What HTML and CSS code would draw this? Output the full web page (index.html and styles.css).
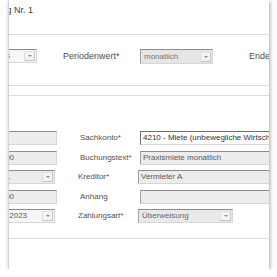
FILE: index.html
```html
<!DOCTYPE html>
<html lang="de">
<head>
  <meta charset="UTF-8" />
  <title>Wiederkehrende Buchung</title>
  <link rel="stylesheet" href="styles.css">
</head>
<body>
  <div class="dialog">
    <div class="inner">
      <div class="head">
        <div class="title"><span>Wiederkehrende Buchung Nr. 1</span></div>
      </div>

      <div class="sect-top">
        <div class="sel sel-start"><span class="val">Rhythmus</span><span class="arrow"></span></div>
        <span class="lbl lbl-period">Periodenwert*</span>
        <div class="sel sel-period"><span class="val">monatlich</span><span class="arrow"></span></div>
        <span class="lbl lbl-end">Ende <span class="warn">!</span></span>
      </div>

      <div class="spacer"></div>

      <div class="sect-main">
        <div class="row">
          <div class="inp left"></div>
          <span class="lbl">Sachkonto*</span>
          <div class="inp right edit">4210 - Miete (unbewegliche Wirtschaftsgüter)</div>
        </div>
        <div class="row">
          <div class="inp left">120.000,00</div>
          <span class="lbl">Buchungstext*</span>
          <div class="inp right">Praxismiete monatlich</div>
        </div>
        <div class="row">
          <div class="sel left-sel"><span class="val">Girokonto.</span><span class="arrow"></span></div>
          <span class="lbl">Kreditor*</span>
          <div class="inp right">Vermieter A</div>
        </div>
        <div class="row">
          <div class="inp left">120.000,00</div>
          <span class="lbl">Anhang</span>
          <div class="inp right"></div>
        </div>
        <div class="row">
          <div class="sel left-sel light"><span class="val">Februar 2023</span><span class="arrow"></span></div>
          <span class="lbl">Zahlungsart*</span>
          <div class="sel sel-pay"><span class="val">Überweisung</span><span class="arrow"></span></div>
        </div>
      </div>

      <div class="foot"></div>
    </div>
  </div>
</body>
</html>
```

FILE: styles.css
```css
body {
  margin: 0;
  background-color: #fff;
  font-family: "Liberation Sans", Arial, sans-serif;
  font-size: 9px;
  color: #555;
}
.dialog {
  margin-left: 8px;
  width: 260px;
  height: 269px;
  border-left: 1px solid #d4d4d4;
  background-color: #fff;
  box-shadow: 1px 1px 4px rgba(0,0,0,0.35);
  overflow: hidden;
}
.inner {
  margin-left: -69px;
  width: 420px;
}
.head {
  height: 34px;
  border-bottom: 1px solid #dcdcdc;
}
.title {
  width: 93px;
  height: 20px;
  display: flex;
  justify-content: flex-end;
  align-items: center;
  white-space: nowrap;
  font-size: 9px;
  color: #34404c;
}
.sect-top {
  height: 51px;
  box-sizing: border-box;
  padding-top: 14px;
  border-bottom: 1px solid #dcdcdc;
  display: flex;
  align-items: flex-start;
}
.spacer {
  height: 9px;
  border-bottom: 1px solid #dcdcdc;
}
.sect-main {
  height: 143px;
  box-sizing: border-box;
  padding-top: 35px;
  border-bottom: 1px solid #dcdcdc;
  display: flex;
  flex-direction: column;
  gap: 5.5px;
}
.foot {
  height: 40px;
}
.row {
  display: flex;
  align-items: center;
  height: 14px;
}
.lbl {
  white-space: nowrap;
  line-height: 14px;
  color: #505050;
}
.row .lbl {
  width: 60px;
  margin-left: 23px;
  font-size: 8px;
}
.lbl-period {
  width: 77px;
  margin-left: 26px;
}
.lbl-end {
  margin-left: 36px;
}
.warn {
  color: #e8a317;
  font-weight: bold;
}
.inp, .sel {
  box-sizing: border-box;
  height: 14px;
  border: 1px solid #d6d6d6;
  border-top-color: #8c8c8c;
  border-left-color: #a0a0a0;
  background-color: #ececec;
  font-size: 8px;
  line-height: 12px;
  padding-left: 3px;
  white-space: nowrap;
  overflow: hidden;
  color: #5a5a5a;
}
.inp.left {
  margin-left: 30px;
  width: 87px;
}
.inp.right {
  width: 200px;
  padding-left: 2px;
}
.inp.edit {
  background-color: #fff;
  border-top-color: #707070;
  border-left-color: #707070;
  color: #333;
}
.sel {
  display: flex;
  align-items: center;
  padding-right: 1px;
}
.sel .val {
  flex: 1;
  overflow: hidden;
}
.sel-start {
  margin-left: 30px;
  width: 67px;
  background-color: #f7f7f7;
  color: #3a6ea5;
}
.sel-period {
  width: 73px;
  height: 15px;
  background-color: #e6e6e6;
  color: #777;
}
.sel-pay {
  width: 95px;
  background-color: #e9e9e9;
  color: #666;
}
.left-sel {
  margin-left: 30px;
  width: 85px;
}
.left-sel.light {
  background-color: #f6f6f6;
  padding-left: 8px;
}
.arrow {
  box-sizing: border-box;
  flex: none;
  width: 11px;
  height: 10px;
  border: 1px solid #c4c4c4;
  border-top-color: #e0e0e0;
  border-left-color: #e0e0e0;
  background-color: #f3f3f3;
  display: flex;
  align-items: center;
  justify-content: center;
}
.arrow::after {
  content: "";
  border-left: 2px solid transparent;
  border-right: 2px solid transparent;
  border-top: 2px solid #8a8a8a;
}
```
